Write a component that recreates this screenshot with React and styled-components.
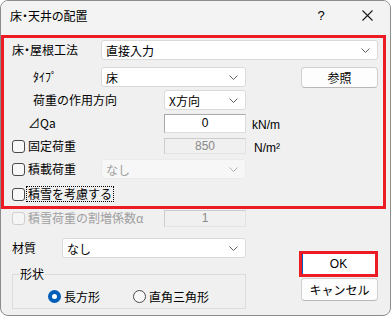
import styled, { createGlobalStyle } from "styled-components";

const GlobalStyle = createGlobalStyle`
  html, body {
    margin: 0;
    background: #ffffff;
  }
  body {
    font-family: "Noto Sans CJK JP", "Liberation Sans", sans-serif;
    font-size: 12px;
    color: #000000;
  }
`;

const Chevron = () => (
  <svg width="9" height="5" viewBox="0 0 9 5">
    <polyline points="0.5,0.5 4.5,4.5 8.5,0.5" fill="none" stroke="#606060" strokeWidth="1" />
  </svg>
);

const CloseIcon = () => (
  <svg width="11" height="11" viewBox="0 0 11 11">
    <path d="M0.5 0.5 L10.5 10.5 M10.5 0.5 L0.5 10.5" stroke="#1a1a1a" strokeWidth="1.1" />
  </svg>
);

const ComboBox = ({ value, disabled, col }) => (
  <Combo $disabled={disabled} $col={col}>
    <span>{value}</span>
    <Chevron />
  </Combo>
);

const Check = ({ label, disabled, focused, col }) => (
  <CheckLabel $disabled={disabled} $col={col}>
    <CheckBox $disabled={disabled} />
    <CheckText $focused={focused}>{label}</CheckText>
  </CheckLabel>
);

const Radio = ({ label, checked }) => (
  <RadioLabel>
    <RadioDot $checked={checked} />
    {label}
  </RadioLabel>
);

const App = () => {
  return (
    <>
      <GlobalStyle />
      <Window>
        <TitleBar>
          <Title>床・天井の配置</Title>
          <TitleButton>?</TitleButton>
          <TitleButton><CloseIcon /></TitleButton>
        </TitleBar>
        <Content>
          <RedBox>
            <UpperGrid>
              <FieldLabel $col="1" $tight>床・屋根工法</FieldLabel>
              <ComboBox value="直接入力" col="2 / 6" />

              <FieldLabel $col="1" $indent={21}>ﾀｲﾌﾟ</FieldLabel>
              <ComboBox value="床" col="2 / 4" />
              <PushButton $col="5" $height={21}>参照</PushButton>

              <FieldLabel $col="1 / 3" $indent={21}>荷重の作用方向</FieldLabel>
              <ComboBox value="X方向" col="3" />

              <FieldLabel $col="1 / 3" $indent={16}>⊿Qa</FieldLabel>
              <NumberBox $col="3">0</NumberBox>
              <Unit $col="4" $indent={6}>kN/m</Unit>

              <Check label="固定荷重" col="1 / 3" />
              <NumberBox $col="3" $disabled $height={16}>850</NumberBox>
              <Unit $col="4" $indent={8}>N/m²</Unit>

              <Check label="積載荷重" col="1" />
              <ComboBox value="なし" col="2 / 4" disabled />

              <Check label="積雪を考慮する" col="1 / 4" focused />
            </UpperGrid>
          </RedBox>

          <Lower>
            <LeftColumn>
              <SnowRow>
                <Check label="積雪荷重の割増係数α" disabled />
                <NumberBox $disabled $height={17}>1</NumberBox>
              </SnowRow>
              <MaterialRow>
                <FieldLabel>材質</FieldLabel>
                <ComboBox value="なし" />
              </MaterialRow>
              <GroupBox>
                <Legend>形状</Legend>
                <RadioRow>
                  <Radio label="長方形" checked />
                  <Radio label="直角三角形" />
                </RadioRow>
              </GroupBox>
            </LeftColumn>
            <RightColumn>
              <DefaultFrame>OK</DefaultFrame>
              <PushButton $height={23}>キャンセル</PushButton>
            </RightColumn>
          </Lower>
        </Content>
      </Window>
    </>
  );
};

const Window = styled.div`
  width: 391px;
  height: 316px;
  box-sizing: border-box;
  border: 1px solid #8c8c8c;
  border-radius: 8px;
  background: #f0f0f0;
  overflow: hidden;
  display: flex;
  flex-direction: column;
`;

const TitleBar = styled.div`
  height: 34px;
  flex: none;
  display: flex;
  align-items: center;
  padding-bottom: 6px;
  box-sizing: border-box;
  background: #f3f3f3;
`;

const Title = styled.div`
  flex: 1;
  padding-left: 9px;
  font-size: 12px;
  font-feature-settings: "palt";
`;

const TitleButton = styled.div`
  width: 46px;
  display: flex;
  justify-content: center;
  align-items: center;
  font-family: "Liberation Sans", sans-serif;
  font-size: 13px;
`;

const Content = styled.div`
  padding-right: 4px;
`;

const RedBox = styled.div`
  height: 174px;
  box-sizing: border-box;
  border: 3px solid #ed1c24;
  overflow: hidden;
`;

const UpperGrid = styled.div`
  display: grid;
  grid-template-columns: 89px 63px 82px 55px 77px;
  grid-template-rows: 24px repeat(5, 20px) 24px;
  row-gap: 3px;
  align-items: center;
  padding: 2px 0 0 8px;

  & > :nth-child(1), & > :nth-child(2) {
    align-self: start;
  }
`;

const FieldLabel = styled.div`
  grid-column: ${(p) => p.$col || "auto"};
  padding-left: ${(p) => p.$indent || 0}px;
  font-feature-settings: ${(p) => (p.$tight ? '"palt"' : "normal")};
  white-space: nowrap;
  line-height: 20px;
`;

const Unit = styled.div`
  grid-column: ${(p) => p.$col || "auto"};
  padding-left: ${(p) => p.$indent || 0}px;
  padding-top: 4px;
  font-family: "Liberation Sans", sans-serif;
  font-size: 12px;
`;

const Combo = styled.div`
  grid-column: ${(p) => p.$col || "auto"};
  height: 20px;
  box-sizing: border-box;
  display: flex;
  align-items: center;
  justify-content: space-between;
  padding: 0 7px 0 4px;
  background: ${(p) => (p.$disabled ? "#f7f7f7" : "#ffffff")};
  color: ${(p) => (p.$disabled ? "#a0a0a0" : "#000000")};
  border: 1px solid ${(p) => (p.$disabled ? "#ebebeb" : "#dadada")};
  border-radius: 3px;
  white-space: nowrap;

  svg {
    opacity: ${(p) => (p.$disabled ? 0.45 : 1)};
  }
`;

const NumberBox = styled.div`
  grid-column: ${(p) => p.$col || "auto"};
  height: ${(p) => p.$height || 19}px;
  box-sizing: border-box;
  display: flex;
  align-items: center;
  justify-content: center;
  background: ${(p) => (p.$disabled ? "#f0f0f0" : "#ffffff")};
  color: ${(p) => (p.$disabled ? "#8a8a8a" : "#000000")};
  border: 1px solid ${(p) => (p.$disabled ? "#cccccc" : "#a8a8a8")};
  border-right-color: ${(p) => (p.$disabled ? "#e3e3e3" : "#dcdcdc")};
  border-bottom-color: ${(p) => (p.$disabled ? "#e3e3e3" : "#dcdcdc")};
  font-family: "Liberation Sans", sans-serif;
  font-size: 12px;
  width: 82px;
`;

const PushButton = styled.div`
  grid-column: ${(p) => p.$col || "auto"};
  width: 77px;
  height: ${(p) => p.$height || 21}px;
  box-sizing: border-box;
  display: flex;
  align-items: center;
  justify-content: center;
  background: #fdfdfd;
  border: 1px solid #d0d0d0;
  border-bottom-color: #b8b8b8;
  border-radius: 4px;
  font-size: 12px;
`;

const DefaultFrame = styled.div`
  width: 79px;
  height: 26px;
  box-sizing: border-box;
  border: 3px solid #ed1c24;
  background: #ffffff;
  box-shadow: inset 1px 0 0 #005fb8;
  display: flex;
  align-items: center;
  justify-content: center;
  font-family: "Liberation Sans", sans-serif;
  font-size: 12px;
`;

const CheckLabel = styled.div`
  grid-column: ${(p) => p.$col || "auto"};
  display: flex;
  align-items: center;
  gap: 2px;
  color: ${(p) => (p.$disabled ? "#a0a0a0" : "#000000")};
  white-space: nowrap;
`;

const CheckBox = styled.span`
  width: 13px;
  height: 13px;
  box-sizing: border-box;
  border: 1px solid ${(p) => (p.$disabled ? "#cfcfcf" : "#4a4a4a")};
  border-radius: 3px;
  background: ${(p) => (p.$disabled ? "#f5f5f5" : "#f8f8f8")};
  flex: none;
`;

const CheckText = styled.span`
  line-height: 14px;
  padding: 0 1px;
  outline: ${(p) => (p.$focused ? "1px dotted #000000" : "none")};
`;

const Lower = styled.div`
  display: flex;
  padding-left: 11px;
`;

const LeftColumn = styled.div`
  width: 234px;
  display: flex;
  flex-direction: column;
`;

const SnowRow = styled.div`
  height: 18px;
  display: flex;
  align-items: center;
  justify-content: space-between;
`;

const MaterialRow = styled.div`
  display: grid;
  grid-template-columns: 50px 1fr;
  align-items: center;
  margin-top: 11px;
`;

const GroupBox = styled.fieldset`
  margin: 8px 0 0 0;
  padding: 0;
  min-width: 0;
  border: 1px solid #dcdcdc;
`;

const Legend = styled.legend`
  margin-left: 6px;
  padding: 0 1px;
  line-height: 16px;
`;

const RadioRow = styled.div`
  height: 26px;
  box-sizing: border-box;
  padding: 3px 0 0 35px;
  display: flex;
  align-items: center;
  gap: 33px;
`;

const RadioLabel = styled.div`
  display: flex;
  align-items: center;
  gap: 3px;
`;

const RadioDot = styled.span`
  width: 13px;
  height: 13px;
  box-sizing: border-box;
  border-radius: 50%;
  flex: none;
  border: ${(p) => (p.$checked ? "4px solid #005fb8" : "1px solid #4a4a4a")};
  background: ${(p) => (p.$checked ? "#ffffff" : "#f8f8f8")};
`;

const RightColumn = styled.div`
  margin-left: 53px;
  width: 79px;
  padding-top: 42px;
  display: flex;
  flex-direction: column;
  align-items: flex-end;
  gap: 1px;
`;

export default App;
